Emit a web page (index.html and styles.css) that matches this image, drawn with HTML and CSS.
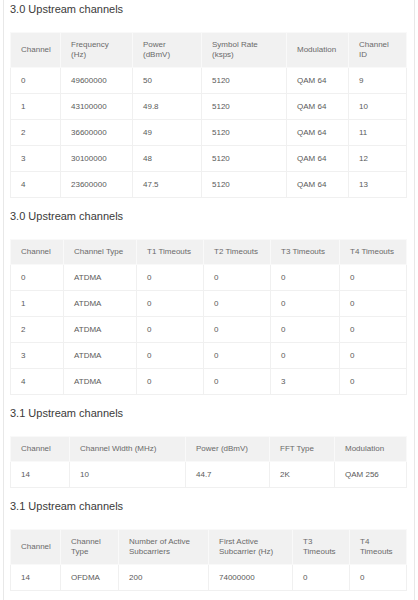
FILE: index.html
```html
<!DOCTYPE html>
<html>
<head>
<meta charset="utf-8">
<link rel="stylesheet" href="styles.css">
</head>
<body>
<div class="panel">
  <section class="block">
    <h2 class="title">3.0 Upstream channels</h2>
    <table class="grid">
      <colgroup>
        <col class="w50"><col class="w72"><col class="w69"><col class="w85"><col class="w62"><col class="w58">
      </colgroup>
      <thead>
        <tr><th>Channel</th><th>Frequency (Hz)</th><th>Power (dBmV)</th><th>Symbol Rate (ksps)</th><th>Modulation</th><th>Channel ID</th></tr>
      </thead>
      <tbody>
        <tr><td>0</td><td>49600000</td><td>50</td><td>5120</td><td>QAM 64</td><td>9</td></tr>
        <tr><td>1</td><td>43100000</td><td>49.8</td><td>5120</td><td>QAM 64</td><td>10</td></tr>
        <tr><td>2</td><td>36600000</td><td>49</td><td>5120</td><td>QAM 64</td><td>11</td></tr>
        <tr><td>3</td><td>30100000</td><td>48</td><td>5120</td><td>QAM 64</td><td>12</td></tr>
        <tr><td>4</td><td>23600000</td><td>47.5</td><td>5120</td><td>QAM 64</td><td>13</td></tr>
      </tbody>
    </table>
  </section>

  <section class="block">
    <h2 class="title">3.0 Upstream channels</h2>
    <table class="grid">
      <colgroup>
        <col class="w53"><col class="w73"><col class="w67"><col class="w67"><col class="w69"><col class="w67">
      </colgroup>
      <thead>
        <tr><th>Channel</th><th>Channel Type</th><th>T1 Timeouts</th><th>T2 Timeouts</th><th>T3 Timeouts</th><th>T4 Timeouts</th></tr>
      </thead>
      <tbody>
        <tr><td>0</td><td>ATDMA</td><td>0</td><td>0</td><td>0</td><td>0</td></tr>
        <tr><td>1</td><td>ATDMA</td><td>0</td><td>0</td><td>0</td><td>0</td></tr>
        <tr><td>2</td><td>ATDMA</td><td>0</td><td>0</td><td>0</td><td>0</td></tr>
        <tr><td>3</td><td>ATDMA</td><td>0</td><td>0</td><td>0</td><td>0</td></tr>
        <tr><td>4</td><td>ATDMA</td><td>0</td><td>0</td><td>3</td><td>0</td></tr>
      </tbody>
    </table>
  </section>

  <section class="block">
    <h2 class="title">3.1 Upstream channels</h2>
    <table class="grid">
      <colgroup>
        <col class="w59"><col class="w116"><col class="w84"><col class="w65"><col class="w72">
      </colgroup>
      <thead>
        <tr><th>Channel</th><th>Channel Width (MHz)</th><th>Power (dBmV)</th><th>FFT Type</th><th>Modulation</th></tr>
      </thead>
      <tbody>
        <tr><td>14</td><td>10</td><td>44.7</td><td>2K</td><td>QAM 256</td></tr>
      </tbody>
    </table>
  </section>

  <section class="block">
    <h2 class="title">3.1 Upstream channels</h2>
    <table class="grid">
      <colgroup>
        <col class="w50"><col class="w58"><col class="w90"><col class="w84"><col class="w57"><col class="w57">
      </colgroup>
      <thead>
        <tr><th>Channel</th><th>Channel Type</th><th>Number of Active Subcarriers</th><th>First Active Subcarrier (Hz)</th><th>T3 Timeouts</th><th>T4 Timeouts</th></tr>
      </thead>
      <tbody>
        <tr><td>14</td><td>OFDMA</td><td>200</td><td>74000000</td><td>0</td><td>0</td></tr>
      </tbody>
    </table>
  </section>
</div>
</body>
</html>
```

FILE: styles.css
```css
html, body {
  margin: 0;
  padding: 0;
  background: #ffffff;
}

body {
  font-family: "Liberation Sans", Arial, sans-serif;
  color: #555555;
}

.panel {
  margin: 0 3px 0 3px;
  width: 412px;
  box-sizing: border-box;
  border-left: 1px solid #e8e8e8;
  border-right: 1px solid #e8e8e8;
  padding: 1px 0 20px 6px;
}

.block {
  margin-bottom: 10px;
}

.title {
  margin: 0 0 15px 0;
  font-size: 11px;
  line-height: 16px;
  font-weight: normal;
  color: #3a3a3a;
}

.grid {
  table-layout: fixed;
  width: 396px;
  border-collapse: collapse;
  font-size: 8px;
  line-height: 10px;
}

.grid th,
.grid td {
  text-align: left;
  vertical-align: middle;
  padding: 8px 10px 7px 10px;
  border: 1px solid #f0f0f0;
}

.grid th {
  padding: 7px 10px 7px 10px;
  background: #f1f1f1;
  color: #6a6a6a;
  font-weight: normal;
  border-color: #f9f9f9;
}

.grid td {
  color: #5a5a5a;
}

.w50 { width: 50px; }
.w53 { width: 53px; }
.w57 { width: 57px; }
.w58 { width: 58px; }
.w59 { width: 59px; }
.w62 { width: 62px; }
.w65 { width: 65px; }
.w67 { width: 67px; }
.w69 { width: 69px; }
.w72 { width: 72px; }
.w73 { width: 73px; }
.w84 { width: 84px; }
.w85 { width: 85px; }
.w90 { width: 90px; }
.w116 { width: 116px; }
```
